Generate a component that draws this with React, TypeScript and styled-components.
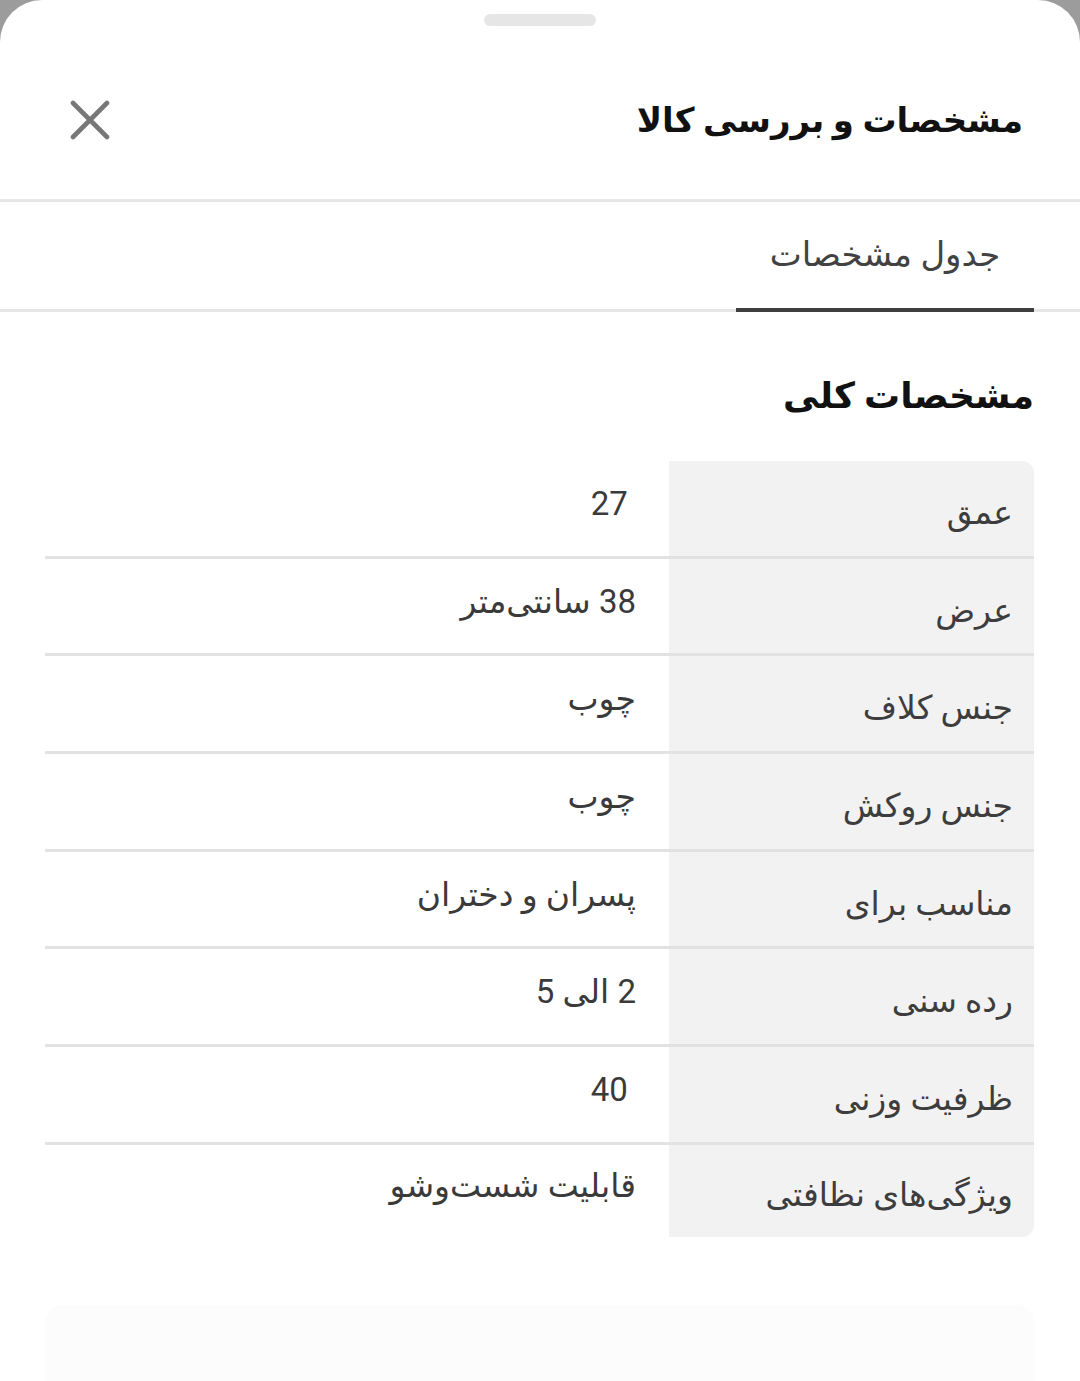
import styled, { createGlobalStyle } from 'styled-components';

const GlobalStyle = createGlobalStyle`
  html, body {
    margin: 0;
    padding: 0;
    background: #9c9c9c;
  }
  * {
    box-sizing: border-box;
  }
`;

const specs = [
  { label: 'عمق', value: '\u00a027' },
  { label: 'عرض', value: '38 سانتی‌متر' },
  { label: 'جنس کلاف', value: 'چوب' },
  { label: 'جنس روکش', value: 'چوب' },
  { label: 'مناسب برای', value: 'پسران و دختران' },
  { label: 'رده سنی', value: '2 الی 5' },
  { label: 'ظرفیت وزنی', value: '\u00a040' },
  { label: 'ویژگی‌های نظافتی', value: 'قابلیت شست‌وشو' }
];

const Sheet = styled.div`
  direction: rtl;
  width: 1080px;
  height: 1381px;
  background: #fff;
  border-radius: 42px 42px 0 0;
  font-family: Roboto, 'DejaVu Sans', sans-serif;
  overflow: hidden;
  display: flex;
  flex-direction: column;
`;

const HandleRow = styled.div`
  height: 40px;
  display: flex;
  justify-content: center;
  padding-top: 14px;
`;

const Handle = styled.div`
  width: 112px;
  height: 12px;
  border-radius: 6px;
  background: #e6e6e6;
`;

const Header = styled.div`
  height: 162px;
  display: flex;
  align-items: center;
  justify-content: space-between;
  padding: 0 57px 0 70px;
  border-bottom: 3px solid #e6e6e6;
`;

const Title = styled.h1`
  margin: 0;
  font-size: 34px;
  font-weight: 700;
  color: #111;
`;

const CloseButton = styled.button`
  border: 0;
  background: none;
  padding: 0;
  width: 40px;
  height: 40px;
  display: flex;
  cursor: pointer;
`;

const TabBar = styled.div`
  height: 110px;
  display: flex;
  padding: 0 46px;
  border-bottom: 3px solid #e6e6e6;
`;

const Tab = styled.div<{ $active?: boolean }>`
  width: 298px;
  display: flex;
  align-items: center;
  justify-content: center;
  padding-bottom: 2px;
  font-size: 34px;
  color: #424242;
  border-bottom: 4px solid ${(p) => (p.$active ? '#3f3f3f' : 'transparent')};
  margin-bottom: -3px;
`;

const Content = styled.div`
  padding: 58px 46px 0 45px;
  flex: 1;
  display: flex;
  flex-direction: column;
`;

const SectionTitle = styled.h2`
  margin: 0 0 39px;
  font-size: 36px;
  font-weight: 700;
  color: #111;
  line-height: 52px;
`;

const Table = styled.div`
  display: flex;
  flex-direction: column;
`;

const Row = styled.div<{ $last?: boolean }>`
  display: grid;
  grid-template-columns: 365px 1fr;
  height: ${(p) => (p.$last ? '92px' : '97.7px')};
  border-bottom: ${(p) => (p.$last ? 'none' : '3px solid #e2e2e2')};
`;

const Label = styled.div<{ $first?: boolean; $last?: boolean }>`
  background: #f2f2f2;
  display: flex;
  align-items: center;
  padding: 8px 21px 0 0;
  font-size: 33px;
  color: #3d3d3d;
  border-top-right-radius: ${(p) => (p.$first ? '12px' : '0')};
  border-bottom-right-radius: ${(p) => (p.$last ? '12px' : '0')};
`;

const Value = styled.div`
  display: flex;
  align-items: center;
  padding: 0 33px 10px 0;
  font-size: 33px;
  color: #3a3a3a;
  white-space: pre;
`;

const Footer = styled.div`
  margin-top: auto;
  height: 76px;
  background: #fcfcfc;
  border-radius: 18px 18px 0 0;
`;

function CloseIcon() {
  return (
    <svg width='40' height='40' viewBox='0 0 40 40'>
      <path d='M3 3 L37 37 M37 3 L3 37' stroke='#777' strokeWidth='4.6' strokeLinecap='round' />
    </svg>
  );
}

export default function App() {
  return (
    <>
      <GlobalStyle />
      <Sheet>
        <HandleRow>
          <Handle />
        </HandleRow>
        <Header>
          <Title>مشخصات و بررسی کالا</Title>
          <CloseButton aria-label='بستن'>
            <CloseIcon />
          </CloseButton>
        </Header>
        <TabBar>
          <Tab $active>جدول مشخصات</Tab>
        </TabBar>
        <Content>
          <SectionTitle>مشخصات کلی</SectionTitle>
          <Table>
            {specs.map((s, i) => (
              <Row key={s.label} $last={i === specs.length - 1}>
                <Label $first={i === 0} $last={i === specs.length - 1}>
                  {s.label}
                </Label>
                <Value>{s.value}</Value>
              </Row>
            ))}
          </Table>
          <Footer />
        </Content>
      </Sheet>
    </>
  );
}
